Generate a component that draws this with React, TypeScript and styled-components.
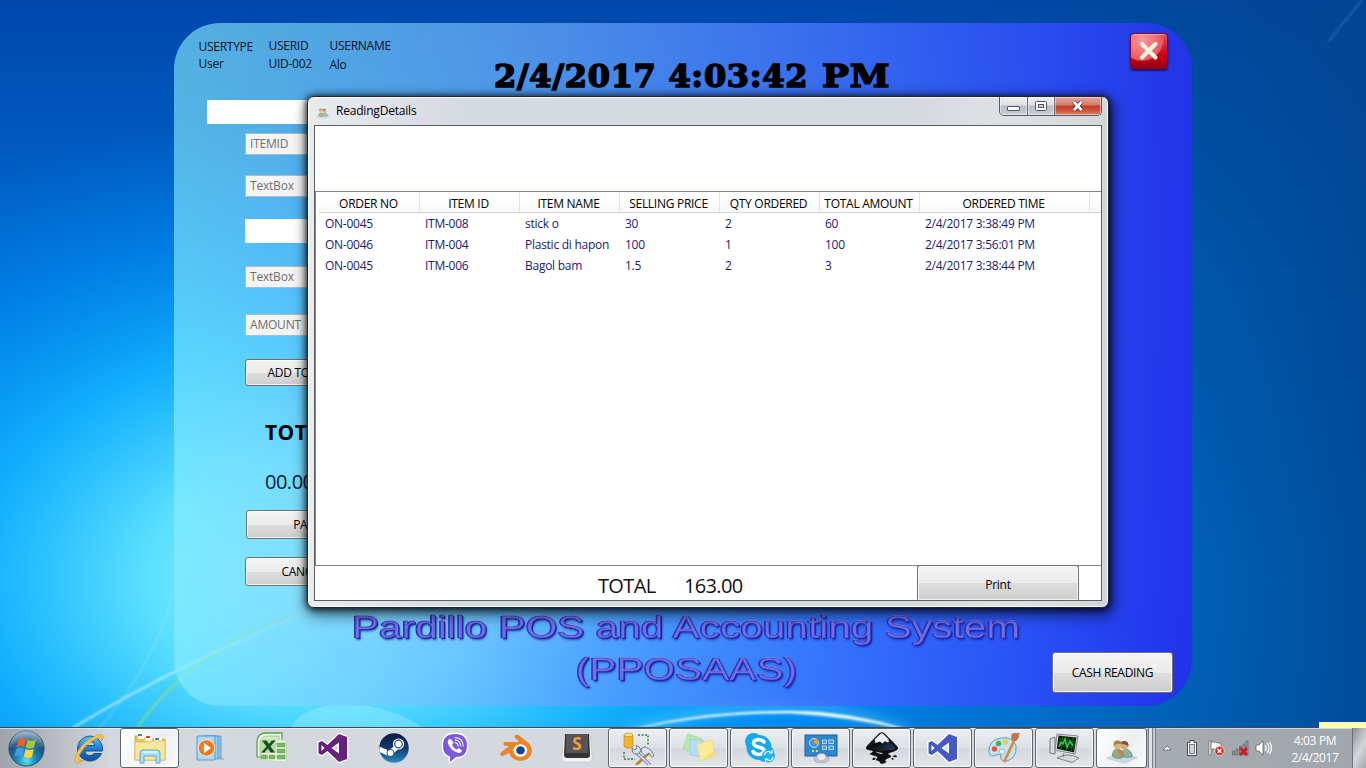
import React from "react";
import styled, { createGlobalStyle, css } from "styled-components";
import { SiInkscape } from "react-icons/si";

const GlobalStyle = createGlobalStyle`
  * { box-sizing: border-box; }
  html, body { margin: 0; padding: 0; }
  body { overflow: hidden; font-family: "Open Sans", "Noto Sans", sans-serif; font-size: 12px; color: #111; }
`;

/* ---------- desktop ---------- */

const Desktop = styled.div`
  position: relative;
  width: 1366px;
  height: 768px;
  overflow: hidden;
  display: flex;
  flex-direction: column;
  justify-content: flex-end;
`;

const WallpaperSvg = styled.svg`
  position: absolute;
  inset: 0;
`;

const Wallpaper = () => (
  <WallpaperSvg width="1366" height="768" viewBox="0 0 1366 768">
    <defs>
      <linearGradient id="sky" x1="0" y1="0" x2="0" y2="1">
        <stop offset="0" stopColor="#0047ac" />
        <stop offset=".35" stopColor="#0069cf" />
        <stop offset=".75" stopColor="#0088ee" />
        <stop offset="1" stopColor="#0080e6" />
      </linearGradient>
      <linearGradient id="dusk" x1="0" y1="0" x2="1" y2="0">
        <stop offset=".6" stopColor="#004a96" stopOpacity="0" />
        <stop offset="1" stopColor="#00458f" stopOpacity=".88" />
      </linearGradient>
      <radialGradient id="glow" gradientUnits="userSpaceOnUse" cx="0" cy="0" r="1" gradientTransform="translate(320 580) scale(680 470)">
        <stop offset="0" stopColor="#8ff0ff" />
        <stop offset=".25" stopColor="#5ce0ff" />
        <stop offset=".5" stopColor="#14b4ff" stopOpacity=".92" />
        <stop offset=".75" stopColor="#0092fa" stopOpacity=".5" />
        <stop offset="1" stopColor="#0080f0" stopOpacity="0" />
      </radialGradient>
      <filter id="soft" x="-20%" y="-20%" width="140%" height="140%"><feGaussianBlur stdDeviation="1.2" /></filter>
      <filter id="haze" x="-50%" y="-50%" width="200%" height="200%"><feGaussianBlur stdDeviation="6" /></filter>
    </defs>
    <rect width="1366" height="768" fill="url(#sky)" />
    <rect width="1366" height="768" fill="url(#dusk)" />
    <rect width="1366" height="768" fill="url(#glow)" />
    <path d="M66 732Q170 668 306 612" stroke="#c8f8ff" strokeWidth="2.4" fill="none" opacity=".65" filter="url(#soft)" />
    <path d="M98 730Q150 670 172 600" stroke="#aef0ff" strokeWidth="1.3" fill="none" opacity=".35" filter="url(#soft)" />
    <path d="M134 732Q168 682 220 650T310 612" stroke="#a4e850" strokeWidth="1.8" fill="none" opacity=".7" filter="url(#soft)" />
    <path d="M290 729Q300 706 345 704Q395 706 424 729" fill="#c4f8ff" opacity=".28" />
    <path d="M620 733Q790 680 910 733" stroke="#7fdcff" strokeWidth="7" fill="none" opacity=".5" filter="url(#haze)" />
    <path d="M630 730Q700 711 790 711Q850 711 912 731Q850 716 790 713Q710 712 630 730Z" fill="#e8fbff" stroke="#e8fbff" strokeWidth=".6" filter="url(#soft)" />
    <path d="M1328 42L1362 0" stroke="#4a90d8" strokeWidth="1.5" opacity=".5" filter="url(#soft)" />
  </WallpaperSvg>
);

/* ---------- POS window ---------- */

const PosWindow = styled.main`
  position: absolute;
  left: 174px;
  top: 23px;
  width: 1018px;
  height: 683px;
  border-radius: 46px;
  overflow: hidden;
  background: linear-gradient(93deg, rgba(140, 244, 255, .6) 0%, rgba(115, 184, 255, .68) 31%, rgba(70, 116, 255, .78) 62%, rgba(50, 76, 255, .82) 83%, rgba(38, 42, 242, .86) 100%);
  display: flex;
  flex-direction: column;
`;

const PosHeader = styled.header`
  display: flex;
  height: 77px;
  padding: 10px 24px 0;
`;

const UserField = styled.dl<{ $width: number; $lift?: number; $gap?: number }>`
  width: ${(p) => p.$width}px;
  margin: ${(p) => 5 - (p.$lift ?? 0)}px 0 0;
  padding-left: 0.5px;
  line-height: 17px;
  letter-spacing: -0.27px;
  color: #06141f;
  white-space: nowrap;
  dt { height: ${(p) => p.$gap ?? 18}px; }
  dd { margin: 0; }
`;

const Clock = styled.time`
  width: 420px;
  margin-left: 134px;
  padding-top: 23px;
  font: 700 32px/40px "DejaVu Serif", serif;
  letter-spacing: 0.7px;
  color: #000;
  -webkit-text-stroke: 1.6px #000;
  white-space: nowrap;
`;

const Meridiem = styled.span`
  display: inline-block;
  margin-left: 2px;
  transform: scaleX(1.12);
  transform-origin: left;
`;

const ExitButton = styled.button`
  width: 38px;
  height: 36px;
  margin: 0 0 0 auto;
  padding: 0;
  border: 1px solid #7c0a1c;
  border-radius: 4px;
  background: radial-gradient(circle at 30% 15%, #ff9a9a, #ea5660 55%, transparent 58%), linear-gradient(#e8485a, #d00018 60%, #960012);
  box-shadow: 0 2px 2px #20106a, inset 0 1px 0 rgba(255, 200, 200, .6);
  display: grid;
  place-items: center;
`;

const PosForm = styled.form`
  width: 260px;
  padding-left: 33px;
  display: flex;
  flex-direction: column;
  align-items: flex-start;
`;

const Field = styled.input<{ $top: number; $wide?: boolean; $height?: number; $filled?: boolean }>`
  width: 220px;
  height: ${(p) => p.$height ?? 22}px;
  margin: ${(p) => p.$top}px 0 0 ${(p) => (p.$wide ? 0 : 38)}px;
  padding: 0 4px 2px;
  border: 1px solid ${(p) => (p.$filled ? "#a9bcc8" : "#f8fcff")};
  background: ${(p) => (p.$filled ? "#f4f4f4" : "#fff")};
  color: #6d7072;
  font: 12px "Open Sans", sans-serif;
  letter-spacing: -0.2px;
  outline: none;
`;

const chrome = css`
  border: 1px solid #707070;
  border-radius: 3px;
  background: linear-gradient(#f3f3f3, #ebebeb 50%, #dddddd 51%, #cdcdcd);
  box-shadow: inset 0 0 0 1px rgba(255, 255, 255, .75);
  color: #000;
  font: 12px "Open Sans", sans-serif;
  letter-spacing: -0.3px;
  white-space: nowrap;
`;

const FormButton = styled.button<{ $top: number; $height: number; $width: number; $inset?: number }>`
  ${chrome}
  width: ${(p) => p.$width}px;
  height: ${(p) => p.$height}px;
  margin: ${(p) => p.$top}px 0 0 ${(p) => 38 + (p.$inset ?? 0)}px;
  padding: 0;
`;

const TotalLabel = styled.div`
  margin: 32px 0 0 58px;
  font-weight: 700;
  font-size: 21px;
  line-height: 28px;
  letter-spacing: 0.4px;
  color: #000;
`;

const TotalValue = styled.div`
  margin: 22px 0 14px 58px;
  font-size: 20px;
  line-height: 28px;
  letter-spacing: -0.5px;
  color: #06202c;
`;

const PosFooter = styled.footer`
  flex: 1;
  display: flex;
  align-items: flex-start;
`;

const Brand = styled.h1`
  width: 668px;
  margin: 21px 0 0 178px;
  display: flex;
  flex-direction: column;
  align-items: center;
  font: 400 31px/42px "Liberation Sans", Arial, sans-serif;
  color: #6f73e2;
  -webkit-text-stroke: 0.5px #3a38c0;
  text-shadow: 1px 1px 0 #2320a8, -1px 0 0 #2a28b4, 0 -1px 0 rgba(150, 150, 240, .6), 1px 2px 2px rgba(30, 24, 150, .8);
`;

const BrandLine = styled.span<{ $stretch: number }>`
  white-space: nowrap;
  transform: scaleX(${(p) => p.$stretch});
`;

const CashButton = styled.button`
  ${chrome}
  width: 121px;
  height: 41px;
  margin: 66px 19px 0 auto;
  padding: 0;
`;

/* ---------- reading details dialog ---------- */

const Dialog = styled.section`
  position: absolute;
  left: 307px;
  top: 96px;
  width: 802px;
  height: 512px;
  padding: 0 6px 6px;
  border: 1px solid #20262e;
  border-radius: 7px;
  background: linear-gradient(90deg, #e9ebed 0, #d6dae2 150px, #d5d9e0 600px, #dfe2e4 700px, #d2d6da 100%);
  box-shadow: inset 0 0 0 1px rgba(255, 255, 255, .85), 0 1px 6px 1px rgba(0, 0, 0, .75), 2px 5px 14px 3px rgba(0, 0, 0, .5);
  display: flex;
  flex-direction: column;
`;

const TitleBar = styled.header`
  height: 28px;
  display: flex;
  align-items: flex-start;
  padding-left: 2px;
  svg.app { margin: 8px 6px 0 0; opacity: .75; }
`;

const Title = styled.span`
  padding-top: 5px;
  line-height: 18px;
  letter-spacing: -0.2px;
  color: #000;
`;

const Caption = styled.div`
  display: flex;
  height: 19px;
  margin-left: auto;
  border: 1px solid #555b66;
  border-top: 0;
  border-radius: 0 0 5px 5px;
  overflow: hidden;
`;

const CaptionButton = styled.button<{ $width: number; $first?: boolean; $danger?: boolean }>`
  width: ${(p) => p.$width}px;
  padding: 0;
  border: 0;
  border-left: ${(p) => (p.$first ? 0 : "1px solid #666d78")};
  display: grid;
  place-items: center;
  background: ${(p) =>
    p.$danger
      ? "linear-gradient(#e3a79b, #d4796a 45%, #bd3a26 50%, #cf5a40 80%, #e08868)"
      : "linear-gradient(#eceef1, #dcdfe4 45%, #b7bbc3 50%, #cdd0d6)"};
  box-shadow: inset 0 0 0 1px rgba(255, 255, 255, .45);
`;

const Client = styled.div`
  flex: 1;
  border: 1px solid #5a5f66;
  background: #fff;
  display: flex;
  flex-direction: column;
`;

const Blank = styled.div`
  height: 65px;
`;

const Grid = styled.div`
  flex: 1;
  border: solid #7f8690;
  border-width: 1px 0 1px 1px;
  padding-left: 3px;
`;

const columns = "100px 100px 100px 100px 100px 100px 170px 1fr";

const GridHead = styled.div`
  display: grid;
  grid-template-columns: ${columns};
  height: 21px;
  border-bottom: 1px solid #d5d5d5;
  background: linear-gradient(#fff 40%, #f7f8fa);
`;

const HeadCell = styled.div`
  margin-right: -1px;
  padding-right: 1px;
  border-right: 1px solid #e2e4e7;
  text-align: center;
  line-height: 24px;
  letter-spacing: -0.28px;
  color: #000;
  white-space: nowrap;
  height: 20px;
  &:last-child { border-right: 0; margin-right: 0; }
`;

const GridRow = styled.div`
  display: grid;
  grid-template-columns: ${columns};
  height: 21px;
`;

const Cell = styled.div`
  padding-left: 6px;
  line-height: 22px;
  letter-spacing: -0.26px;
  color: #191970;
  white-space: nowrap;
`;

const DialogFooter = styled.div`
  height: 34px;
  padding-left: 283px;
  display: flex;
  font-size: 20px;
  line-height: 40px;
  letter-spacing: -0.65px;
  color: #111;
`;

const FooterText = styled.span<{ $width: number }>`
  width: ${(p) => p.$width}px;
`;

const PrintButton = styled.button`
  ${chrome}
  width: 162px;
  height: 35px;
  margin: -1px 22px 0 auto;
  padding: 2px 0 0;
  border-bottom: 0;
  border-radius: 3px 3px 0 0;
`;

/* ---------- taskbar ---------- */

const Taskbar = styled.nav`
  position: relative;
  height: 41px;
  border-top: 1px solid #3c4a58;
  background: linear-gradient(90deg, #9fa3aa 0, #b6b9c0 50px, #d3d7de 110px, #d5d9e0 1100px, #a6abb2 1158px, #a1a6ac 100%);
  box-shadow: inset 0 1px 0 rgba(255, 255, 255, .5);
  display: flex;
`;

const StartSlot = styled.div`
  width: 59px;
  padding: 2px 0 0 8px;
`;

const Tasks = styled.div`
  display: flex;
  gap: 2px;
`;

const Task = styled.div<{ $open?: boolean; $width?: number; $active?: boolean }>`
  width: ${(p) => p.$width ?? 59}px;
  height: 40px;
  display: grid;
  place-items: center;
  ${(p) =>
    p.$open &&
    css`
      border: 1px solid #5e646d;
      border-radius: 3px;
      background: ${p.$active ? "linear-gradient(115deg, #fff, #eceef1 60%, #fafafa)" : "linear-gradient(#eceef1, #dcdfe4 50%, #d4d7dd 51%, #e4e6ea)"};
      box-shadow: inset 0 0 0 1px rgba(255, 255, 255, .8);
    `}
`;

const StackEdges = styled.div`
  width: 8px;
  margin-left: 1px;
  border: solid #7b8189;
  border-width: 0 1px;
  background: linear-gradient(90deg, #dfe2e6 3px, #7b8189 3px 4px, #c8ccd2 4px);
`;

const Tray = styled.div`
  margin-left: auto;
  display: flex;
  align-items: center;
`;

const TrayIcons = styled.div`
  display: flex;
  align-items: center;
  gap: 6px;
  width: 115px;
  svg:first-child { margin-right: 5px; }
`;

const TrayClock = styled.div`
  width: 76px;
  margin-right: -1px;
  text-align: center;
  color: #fff;
  line-height: 17px;
  letter-spacing: -0.35px;
  padding-top: 2px;
`;

const ShowDesktop = styled.div`
  width: 14px;
  height: 40px;
  border-left: 1px solid #6d7278;
  background: linear-gradient(120deg, #8b9096, #d5d8da 55%, #a2a6ab);
`;

const BalloonEdge = styled.div`
  position: absolute;
  right: 0;
  bottom: 40px;
  width: 47px;
  height: 6px;
  background: #ffffb4;
`;

/* ---------- icons ---------- */

const People = ({ size, className }: { size: number; className?: string }) => (
  <svg className={className} width={size} height={size} viewBox="0 0 32 32">
    <path d="M0 27L12 21L32 26L19 32Z" fill="#c9dcef" stroke="#9fc0e2" strokeWidth=".7" />
    <path d="M17 25Q15 18 20 17Q27 19 27 25Q22 28 17 25Z" fill="#8fb09c" stroke="#607a5c" strokeWidth=".6" />
    <circle cx="18.500" cy="13.500" r="4" fill="#d9a878" />
    <path d="M14.500 12Q15 8 18.500 8.500Q23.500 8.500 23 14.500Q20.500 11 14.500 12Z" fill="#6a5a3e" />
    <path d="M6 25Q5 18 11 17Q18 18 17 26Q11 29 6 25Z" fill="#9aa67c" stroke="#607a4a" strokeWidth=".6" />
    <path d="M12 18L16 18L14 25Z" fill="#d2743d" />
    <circle cx="11.500" cy="13" r="4.100" fill="#dcb67c" />
    <path d="M7.300 14Q6 7.500 11.500 8Q16 8 15.800 12Q11 10.500 7.300 14Z" fill="#a38440" />
  </svg>
);

const StartOrb = () => (
  <svg width="37" height="37" viewBox="0 0 37 37">
    <defs>
      <radialGradient id="orb" cx=".5" cy=".85" r=".8">
        <stop offset="0" stopColor="#5fe0f4" />
        <stop offset=".35" stopColor="#1a86b4" />
        <stop offset=".7" stopColor="#1b4f7c" />
        <stop offset="1" stopColor="#6d93ae" />
      </radialGradient>
      <linearGradient id="orbShine" x1="0" y1="0" x2="0" y2="1">
        <stop offset="0" stopColor="#fff" stopOpacity=".65" />
        <stop offset="1" stopColor="#fff" stopOpacity=".1" />
      </linearGradient>
    </defs>
    <circle cx="18.500" cy="18.500" r="17.600" fill="url(#orb)" stroke="#2d5370" strokeWidth="1" />
    <path d="M2 17A16.500 16.500 0 0 1 35 17Q18 21 2 17Z" fill="url(#orbShine)" opacity=".5" />
    <path d="M11 9.500Q14.500 7 18 9L16.300 17Q12.500 15 8.500 17.500Z" fill="#ee5f2a" />
    <path d="M19.500 9.800Q23.500 12 28 9.500L26 17.500Q22 19.500 17.800 17.500Z" fill="#9acb40" />
    <path d="M8.200 19Q12 16.500 16 18.500L14.300 26.500Q10.500 24.500 6.500 27Z" fill="#3f9be0" />
    <path d="M17.500 19Q21.500 21 25.700 18.900L24 27Q20.500 29 15.800 27Z" fill="#fcd43c" />
  </svg>
);

const Explorer = () => (
  <svg width="34" height="32" viewBox="0 0 34 32">
    <path d="M2 4h5l1 2h9l1 1h14v21H2Z" fill="#e8c65c" stroke="#c19a35" strokeWidth=".7" />
    <path d="M5 2h6v5H5Z" fill="#f8f8f0" /><path d="M5 2h4v2H5Z" fill="#36a04a" />
    <path d="M12 4h7v5h-7Z" fill="#f8f8f0" /><path d="M13 4h4v2h-4Z" fill="#d2452d" />
    <path d="M21 6h8v5h-8Z" fill="#f8f8f0" /><path d="M22 6h4v2h-4Z" fill="#3c86d8" />
    <path d="M2 10h12l2-1h16v19H2Z" fill="#fbe79a" stroke="#d9b550" strokeWidth=".7" />
    <path d="M7 31V21q0-3 3-3h14q3 0 3 3v10h-4v-7H11v7Z" fill="#a9e0fa" stroke="#4ea3d4" strokeWidth=".9" />
    <path d="M10 20h14" stroke="#eafaff" strokeWidth="1.500" />
  </svg>
);

const InternetExplorer = () => (
  <svg width="34" height="33" viewBox="0 0 34 33">
    <defs><linearGradient id="ie" x1="0" y1="0" x2="0" y2="1"><stop offset="0" stopColor="#5cc4f4" /><stop offset=".5" stopColor="#1f7fcc" /><stop offset="1" stopColor="#0e4f9c" /></linearGradient></defs>
    <path d="M29.500 21.500A12.500 12.500 0 1 1 30.500 16V19H13Q13.500 23.500 18 23.500Q20.800 23.500 22 21.500ZM13 13.500H23Q22.500 9.500 18 9.500Q13.500 9.500 13 13.500Z" fill="url(#ie)" stroke="#0d4a86" strokeWidth=".9" />
    <path d="M6 31Q1 31 4 23Q8 13 19 6Q30 0 31 4Q31.500 6 30 9Q30 5 26 6Q19 8 12 16Q5 25 7 28Q8 30 12 28Q8 31 6 31Z" fill="#f6c34a" stroke="#c98e22" strokeWidth=".5" />
  </svg>
);

const MediaPlayer = () => (
  <svg width="30" height="28" viewBox="0 0 30 28">
    <path d="M22 26h7l-3-3Z" fill="#9aa4b0" opacity=".6" />
    <path d="M9 2h16v22H9Z" fill="#8cc4ea" stroke="#4a8cc0" strokeWidth=".7" />
    <path d="M5 2h17v23H5Z" fill="#9ccfef" stroke="#4a8cc0" strokeWidth=".7" />
    <path d="M1 2h18v24H1Z" fill="#a9d8f4" stroke="#4a8cc0" strokeWidth=".8" />
    <circle cx="10.500" cy="14" r="8.300" fill="#f07c1e" stroke="#fff" strokeWidth=".8" />
    <path d="M8 9L15 14L8 19Z" fill="#fff" />
  </svg>
);

const Excel = () => (
  <svg width="33" height="32" viewBox="0 0 33 32">
    <path d="M2 25V9Q3 1 11 1H27V26Z" fill="#f6fbf2" stroke="#57a245" strokeWidth="1.300" />
    <path d="M5 24V10Q6 4 12 4H24V24Z" fill="#d5e9c6" stroke="#8cc274" strokeWidth=".8" />
    <path d="M6 8H31L31 30L6 28Z" fill="#f3f8ef" stroke="#b4ceaa" strokeWidth=".6" />
    <path d="M22 11h8v4h-8ZM22 17h8v4h-8ZM22 23h8v4h-8ZM14 23h6v4h-6ZM6.500 23h6v4h-6Z" fill="#79b85d" stroke="#5fa64a" strokeWidth=".5" />
    <path d="M6 8h15v13H6Z" fill="#b9dca4" />
    <path d="M7 8.500h4.500l2.500 3.500L17 8.500h3.500l-5 6L20 20.500h-4.500l-2.500-4L9.500 20.500H6l5.500-6Z" fill="#154f26" />
  </svg>
);

const VisualStudio = ({ color }: { color: string }) => (
  <svg width="34" height="34" viewBox="0 0 34 34">
    <path d="M23 3L31 6V28L23 31L11.500 20L6 24L2.500 22.500V11.500L6 10L11.500 14Z M23 11.500L15.500 17L23 22.500Z M5.500 14V20L8.500 17Z" fill={color} fillRule="evenodd" stroke="#fff" strokeWidth="2.600" strokeLinejoin="round" paintOrder="stroke" />
  </svg>
);

const Steam = () => (
  <svg width="30" height="30" viewBox="0 0 30 30">
    <defs>
      <linearGradient id="steam" x1="0" y1="0" x2="0" y2="1"><stop offset="0" stopColor="#0b1a3c" /><stop offset=".5" stopColor="#123a6c" /><stop offset="1" stopColor="#2a8cc4" /></linearGradient>
      <clipPath id="steamDisc"><circle cx="15" cy="15" r="14.700" /></clipPath>
    </defs>
    <g clipPath="url(#steamDisc)">
      <rect width="30" height="30" fill="url(#steam)" />
      <path d="M0 16L10 20.500L15 16.500L20 12" stroke="#fff" strokeWidth="5" fill="none" />
    </g>
    <circle cx="19.500" cy="11" r="5.600" fill="#fff" />
    <circle cx="19.500" cy="11" r="3.800" fill="#fff" stroke="#173f70" strokeWidth="1.200" />
    <circle cx="11.500" cy="20" r="3.600" fill="#fff" stroke="#174a7c" strokeWidth="1" />
  </svg>
);

const Viber = () => (
  <svg width="30" height="32" viewBox="0 0 30 32">
    <path d="M15 2Q27 2 27 13.500Q27 25 16 25L10 30V24.500Q3 23 3 13.500Q3 2 15 2Z" fill="#7c58e0" stroke="#fff" strokeWidth="2.800" strokeLinejoin="round" paintOrder="stroke" />
    <path d="M9.500 7Q7 8.500 8 11.500Q11 19 18.500 21Q21 21.500 22 18.500L18.800 16L16.800 17.500Q13 16 12.200 12.500L13.500 10.500L11 7Z" fill="#fff" />
    <path d="M15 10.500Q18 11 18.200 14M15 8Q20.500 8.500 20.700 14M15 5.500Q23 6 23.200 14" fill="none" stroke="#fff" strokeWidth="1.100" strokeLinecap="round" />
  </svg>
);

const Blender = () => (
  <svg width="34" height="30" viewBox="0 0 34 30">
    <path d="M16.500 2.500Q18.500 1.500 20 3L29 10Q33 14 32.500 18.500Q31 27 21.500 27.500Q12.500 27 10.500 19.500L4 22.500Q1 23 1.500 20.500L11 12.500H6Q3.500 11.500 5.500 9.500H18.500L21 8.500L16.500 5Q15.500 3.500 16.500 2.500Z" fill="#f08420" stroke="#c96a14" strokeWidth=".5" />
    <ellipse cx="21.300" cy="17.500" rx="6.900" ry="6.300" fill="#fff" />
    <ellipse cx="21.500" cy="17.300" rx="4.300" ry="4" fill="#12458f" />
  </svg>
);

const Sublime = () => (
  <svg width="32" height="30" viewBox="0 0 32 30">
    <path d="M2 8Q2 2 5 2H27Q30 2 30 8L31 26Q31 29 28 29H4Q1 29 1 26Z" fill="#f2f2f2" stroke="#b9bcc0" strokeWidth=".5" />
    <path d="M4 1H28L29 22Q29 25 26 25H6Q3 25 3 22Z" fill="#343434" />
    <path d="M5 1H27V20H5Z" fill="#565656" />
    <text x="16" y="17" textAnchor="middle" fontFamily="Open Sans" fontWeight="700" fontSize="17" fill="#f0a040">S</text>
  </svg>
);

const DatabaseTools = () => (
  <svg width="34" height="34" viewBox="0 0 34 34">
    <path d="M3 4v11q0 2 4.500 2t4.500-2V4Z" fill="#f0b529" stroke="#b57f10" strokeWidth=".6" />
    <ellipse cx="7.500" cy="4" rx="4.500" ry="1.800" fill="#fce28c" stroke="#b57f10" strokeWidth=".6" />
    <path d="M17 4H27V15M3 21V28H14" stroke="#2f7a3c" strokeWidth="1.400" strokeDasharray="2 1.500" fill="none" />
    <path d="M28 22L15 34" stroke="#b98a35" strokeWidth="2.800" />
    <path d="M15 21L29 34" stroke="#5e6c7e" strokeWidth="3.400" />
    <path d="M15 21L29 34" stroke="#cfd9e4" strokeWidth="2.200" />
    <path d="M11 17l3 2 2-2-1-2.500q4 .5 4.500 4t-3 4.500-5-2Z" fill="#d5dee8" stroke="#5b6a7c" strokeWidth=".8" />
    <path d="M20 18l4-2.500 6 4 3 5-2 1.500-3-4-4 2.500-3-3Z" fill="#dde5ee" stroke="#566678" strokeWidth=".8" />
  </svg>
);

const StickyNotes = () => (
  <svg width="34" height="30" viewBox="0 0 34 30">
    <path d="M6 1L20 6L14 21L1 16Z" fill="#b8e8a8" stroke="#8ccc7e" strokeWidth=".5" />
    <path d="M8 6L22 8L20 24L8 22Z" fill="#b8dcf8" stroke="#88bce6" strokeWidth=".5" />
    <path d="M15 11L30 7L33 23L18 28Z" fill="#fbeb98" stroke="#e6cf6a" strokeWidth=".5" />
    <path d="M18 28L32.500 23L32 18Z" fill="#f4d868" opacity=".7" />
  </svg>
);

const Skype = () => (
  <svg width="32" height="32" viewBox="0 0 32 32">
    <circle cx="9.500" cy="9.500" r="8.500" fill="#13a9ea" /><circle cx="21" cy="21" r="9" fill="#13a9ea" /><circle cx="15" cy="15.500" r="12.500" fill="#13a9ea" />
    <path d="M20 10Q18 7.500 14.500 7.500Q9.500 8 9.500 11.500Q10 14 14.500 15Q20 16 20 19Q19.500 22.500 15 22.500Q11 22.500 9 19.500" fill="none" stroke="#fff" strokeWidth="3.600" strokeLinecap="round" />
    <circle cx="24.500" cy="24" r="6.500" fill="#21b0ee" />
    <path d="M20.500 23q1-4 4.500-3.500l3 1.500m0-3v3h-3M29 25q-1 4-4.500 3.500l-3-1.500m0 3v-3h3" fill="none" stroke="#fff" strokeWidth="1.100" />
  </svg>
);

const ControlPanel = () => (
  <svg width="34" height="30" viewBox="0 0 34 30">
    <rect x="1" y="2" width="32" height="21" fill="#2f86cc" stroke="#1c5f9e" />
    <circle cx="10" cy="10" r="4.500" fill="#3e96d8" stroke="#d4ecfa" strokeWidth=".9" />
    <path d="M10 10V5.500A4.500 4.500 0 0 1 14 12Z" fill="#f39a2a" />
    <path d="M18.500 7h4v3.500h-4ZM25 7h4.500v3.500H25ZM18.500 13h4v3.500h-4ZM25 13h4.500v3.500H25Z" fill="#3e96d8" stroke="#c8e6f8" strokeWidth=".9" />
    <path d="M8 18h2M12 18h2" stroke="#f8cb50" strokeWidth="2" />
    <ellipse cx="17.500" cy="26" rx="7.500" ry="3.800" fill="#c2cad2" stroke="#8e98a4" strokeWidth=".7" />
    <ellipse cx="17.500" cy="24" rx="4.500" ry="3.500" fill="#e6ebef" stroke="#9aa4ae" strokeWidth=".6" />
  </svg>
);

const Inkscape = () => (
  <svg width="32" height="32" viewBox="0 0 32 32">
    <defs>
      <linearGradient id="ink" x1="0" y1="0" x2="1" y2="1">
        <stop offset="0" stopColor="#5b6068" />
        <stop offset=".4" stopColor="#0a0a0c" />
        <stop offset="1" stopColor="#30466e" />
      </linearGradient>
    </defs>
    <SiInkscape size={32} color="#101012" />
    <path d="M15.900 2.500L29 15.500Q29 18 24 18H18Q14 20 10 18H6Q3 17 4 15Z" fill="url(#ink)" />
    <path d="M16 2L23.500 9.500L21 10.500L19 9L16.500 11.500L14 9.500L10 11L8.500 10Z" fill="#eef1f4" />
  </svg>
);

const Paint = () => (
  <svg width="34" height="34" viewBox="0 0 34 34">
    <path d="M2 21Q1 9 14 7Q26 5 29 15Q30 27 20 30Q12 30 14 25Q14 22 9 24Q3 27 2 21Z" fill="#c4e4f2" stroke="#5f9fba" strokeWidth="1" />
    <circle cx="7.500" cy="18" r="2.700" fill="#e0574a" /><circle cx="11.500" cy="12.500" r="2.700" fill="#4bb04e" /><circle cx="18.500" cy="11" r="2.700" fill="#f2c84a" />
    <circle cx="15" cy="20.500" r="2.600" fill="#f1f9fc" stroke="#68a2bc" strokeWidth=".7" />
    <path d="M17 31L26.500 11" stroke="#d98a3a" strokeWidth="2.800" />
    <path d="M25 10Q23 4 26 2L33 2Q31 5 32 6Q30 11 26 11Z" fill="#b87a48" />
  </svg>
);

const Monitor = () => (
  <svg width="34" height="30" viewBox="0 0 34 30">
    <path d="M2 6l5-2v17l-5-1Z" fill="#d8dadc" stroke="#5a6066" strokeWidth=".8" />
    <path d="M9 1L30 3L27 21L7 17Z" fill="#e3e4e4" stroke="#6a6f74" strokeWidth=".8" />
    <path d="M10.500 2.500L28.500 4.500L26 19.500L8.700 15.800Z" fill="#0a2410" />
    <path d="M11 6l17 2M10 9l17 2.500M9.500 12l17 3M15 3l-2 13M20 4l-1.500 13M25 4.500l-2 14" stroke="#15702a" strokeWidth=".7" />
    <path d="M11 14l2-5 2 2 2-5 2 8 3-6 3 5" stroke="#2fce48" strokeWidth="1.500" fill="none" />
    <path d="M16 20l-1 4M9 25q10-6 22 0l-7 4.500Z" fill="#d6d8da" stroke="#6a6f74" strokeWidth=".8" />
  </svg>
);

const pinned = [<MediaPlayer />, <Excel />, <VisualStudio color="#68217a" />, <Steam />, <Viber />, <Blender />, <Sublime />];
const openTasks = [<DatabaseTools />, <StickyNotes />, <Skype />, <ControlPanel />, <Inkscape />, <VisualStudio color="#4659c4" />, <Paint />, <Monitor />];

const headings = ["ORDER NO", "ITEM ID", "ITEM NAME", "SELLING PRICE", "QTY ORDERED", "TOTAL AMOUNT", "ORDERED TIME", ""];
const orders = [
  ["ON-0045", "ITM-008", "stick o", "30", "2", "60", "2/4/2017 3:38:49 PM"],
  ["ON-0046", "ITM-004", "Plastic di hapon", "100", "1", "100", "2/4/2017 3:56:01 PM"],
  ["ON-0045", "ITM-006", "Bagol bam", "1.5", "2", "3", "2/4/2017 3:38:44 PM"],
];

export default function App() {
  return (
    <Desktop>
      <GlobalStyle />
      <Wallpaper />

      <PosWindow>
        <PosHeader>
          <UserField $width={70} $gap={17}><dt>USERTYPE</dt><dd>User</dd></UserField>
          <UserField $width={61} $lift={1}><dt>USERID</dt><dd>UID-002</dd></UserField>
          <UserField $width={31} $lift={1} $gap={19}><dt>USERNAME</dt><dd>Alo</dd></UserField>
          <Clock>2/4/2017 4:03:42 <Meridiem>PM</Meridiem></Clock>
          <ExitButton type="button" aria-label="Exit">
            <svg width="22" height="22" viewBox="0 0 22 22"><path d="M4 4L17.500 17.500M17.500 4L4 17.500" stroke="#ecf4df" strokeWidth="4.200" strokeLinecap="round" /></svg>
          </ExitButton>
        </PosHeader>
        <PosForm>
          <Field $top={0} $wide $height={24} readOnly />
          <Field $top={9} $filled defaultValue="ITEMID" readOnly />
          <Field $top={20} $filled defaultValue="TextBox" readOnly />
          <Field $top={22} $height={24} readOnly />
          <Field $top={23} $filled defaultValue="TextBox" readOnly />
          <Field $top={26} $filled defaultValue="AMOUNT" readOnly />
          <FormButton type="button" $top={23} $height={27} $width={118}>ADD TO CART</FormButton>
          <TotalLabel>TOTAL</TotalLabel>
          <TotalValue>00.00</TotalValue>
          <FormButton type="button" $top={0} $height={29} $width={115} $inset={1}>PAY</FormButton>
          <FormButton type="button" $top={18} $height={29} $width={116}>CANCEL</FormButton>
        </PosForm>
        <PosFooter>
          <Brand>
            <BrandLine $stretch={1.31}>Pardillo POS and Accounting System</BrandLine>
            <BrandLine $stretch={1.31}>(PPOSAAS)</BrandLine>
          </Brand>
          <CashButton type="button">CASH READING</CashButton>
        </PosFooter>
      </PosWindow>

      <Dialog>
        <TitleBar>
          <People size={14} className="app" />
          <Title>ReadingDetails</Title>
          <Caption>
            <CaptionButton $width={27} $first aria-label="Minimize">
              <svg width="13" height="12" viewBox="0 0 13 12"><rect x=".5" y="6.500" width="12" height="4" rx=".5" fill="#fff" stroke="#50565f" /></svg>
            </CaptionButton>
            <CaptionButton $width={27} aria-label="Maximize">
              <svg width="12" height="10" viewBox="0 0 12 10"><rect x=".5" y=".5" width="11" height="9" rx="1" fill="#fff" stroke="#50565f" /><rect x="3.500" y="3.500" width="5" height="3" fill="#cfd3d9" stroke="#50565f" /></svg>
            </CaptionButton>
            <CaptionButton $width={47} $danger aria-label="Close">
              <svg width="14" height="12" viewBox="0 0 14 12"><path d="M3 2L10.500 10M10.500 2L3 10" stroke="#5a3030" strokeWidth="4.400" /><path d="M3 2L10.500 10M10.500 2L3 10" stroke="#fff" strokeWidth="2.700" /></svg>
            </CaptionButton>
          </Caption>
        </TitleBar>
        <Client>
          <Blank />
          <Grid>
            <GridHead>{headings.map((h, i) => <HeadCell key={i}>{h}</HeadCell>)}</GridHead>
            {orders.map((row, r) => (
              <GridRow key={r}>{row.map((v, i) => <Cell key={i}>{v}</Cell>)}</GridRow>
            ))}
          </Grid>
          <DialogFooter>
            <FooterText $width={86}>TOTAL</FooterText>
            <FooterText $width={70}>163.00</FooterText>
            <PrintButton type="button">Print</PrintButton>
          </DialogFooter>
        </Client>
      </Dialog>

      <Taskbar>
        <StartSlot><StartOrb /></StartSlot>
        <Tasks>
          <Task><InternetExplorer /></Task>
          <Task $open $active><Explorer /></Task>
          {pinned.map((icon, i) => <Task key={i}>{icon}</Task>)}
          {openTasks.map((icon, i) => <Task key={i} $open>{icon}</Task>)}
          <Task $open $active $width={51}><People size={30} /></Task>
        </Tasks>
        <StackEdges />
        <Tray>
          <TrayIcons>
            <svg width="10" height="6" viewBox="0 0 10 6"><path d="M1 5L5 1L9 5Z" fill="#fff" stroke="#5c6168" strokeWidth=".8" /></svg>
            <svg width="18" height="18" viewBox="0 0 18 18"><path d="M7 1.500h4v2h2.500v13h-9v-13H7Z" fill="#fff" stroke="#474c52" /><path d="M6.500 5.500h5v9h-5Z" fill="#d0d3d6" stroke="#565b60" strokeWidth=".8" /></svg>
            <svg width="18" height="18" viewBox="0 0 18 18"><path d="M2 2h2v14H2Z" fill="#fff" stroke="#555" strokeWidth=".6" /><path d="M4 3h5l1 1h4v7h-5l-1-1H4Z" fill="#fff" stroke="#555" strokeWidth=".7" /><circle cx="12.500" cy="12" r="4.700" fill="#dd2c1e" stroke="#fff" strokeWidth=".6" /><path d="M10.500 10l4 4m0-4l-4 4" stroke="#fff" strokeWidth="1.400" /></svg>
            <svg width="18" height="18" viewBox="0 0 18 18"><path d="M1.500 12h2v4h-2ZM5 10h2v6H5ZM8.500 7.500h2V16h-2ZM12 5h2v11h-2ZM15 2h2v14h-2Z" fill="#9a9fa5" stroke="#4f545a" strokeWidth=".6" /><path d="M9 9l7 7m0-7l-7 7" stroke="#d4151a" strokeWidth="2.600" /></svg>
            <svg width="18" height="18" viewBox="0 0 18 18"><path d="M1 6h3l4-4v14l-4-4H1Z" fill="#fff" stroke="#5a5f65" strokeWidth=".8" /><path d="M10 6q2 3 0 6M12 4q4 5 0 10M14.500 3q4 6 0 12" fill="none" stroke="#fff" strokeWidth="1.200" /></svg>
          </TrayIcons>
          <TrayClock>4:03 PM<br />2/4/2017</TrayClock>
          <ShowDesktop />
        </Tray>
        <BalloonEdge />
      </Taskbar>
    </Desktop>
  );
}
